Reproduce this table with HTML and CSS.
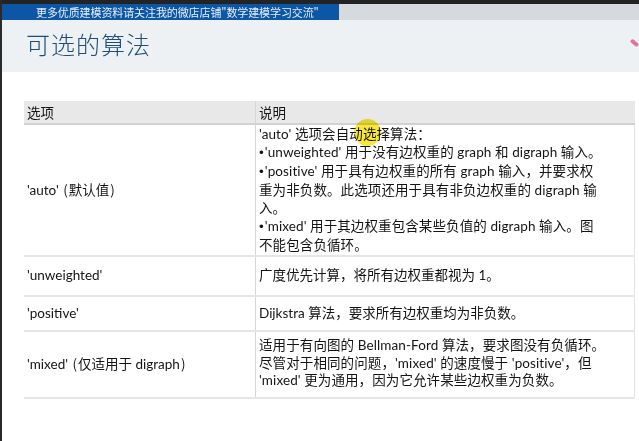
FILE: index.html
```html
<!DOCTYPE html>
<html lang="zh">
<head>
<meta charset="utf-8">
<title>可选的算法</title>
<link rel="stylesheet" href="styles.css">
</head>
<body>
<div class="frame">
  <div class="topstrip"></div>
  <div class="bannerbar">
    <div class="banner">更多优质建模资料请关注我的微店店铺"数学建模学习交流"</div>
    <div class="bannerrest"></div>
  </div>
  <div class="header">
    <h1 class="title">可选的算法</h1>
    <span class="pinkmark"></span>
  </div>
  <div class="content">
    <table class="opts">
      <thead>
        <tr><th class="c1">选项</th><th class="c2">说明</th></tr>
      </thead>
      <tbody>
        <tr class="r1">
          <td class="c1">'auto' <span class="paren">(</span>默认值<span class="paren">)</span></td>
          <td class="c2">
            <div class="ln">'auto' 选项会自<span class="hl">动选</span>择算法：</div>
            <div class="ln"><span class="bul">•</span>'unweighted' 用于没有边权重的 graph 和 digraph 输入。</div>
            <div class="ln"><span class="bul">•</span>'positive' 用于具有边权重的所有 graph 输入，并要求权</div>
            <div class="ln">重为非负数。此选项还用于具有非负边权重的 digraph 输</div>
            <div class="ln">入。</div>
            <div class="ln"><span class="bul">•</span>'mixed' 用于其边权重包含某些负值的 digraph 输入。图</div>
            <div class="ln">不能包含负循环。</div>
          </td>
        </tr>
        <tr class="r2">
          <td class="c1">'unweighted'</td>
          <td class="c2">广度优先计算，将所有边权重都视为 1。</td>
        </tr>
        <tr class="r3">
          <td class="c1">'positive'</td>
          <td class="c2">Dijkstra 算法，要求所有边权重均为非负数。</td>
        </tr>
        <tr class="r4">
          <td class="c1">'mixed' <span class="paren">(</span>仅适用于 digraph<span class="paren">)</span></td>
          <td class="c2">
            <div class="ln">适用于有向图的 Bellman-Ford 算法，要求图没有负循环。</div>
            <div class="ln">尽管对于相同的问题，'mixed' 的速度慢于 'positive'，但</div>
            <div class="ln">'mixed' 更为通用，因为它允许某些边权重为负数。</div>
          </td>
        </tr>
      </tbody>
    </table>
  </div>
</div>
</body>
</html>
```
FILE: styles.css
```css
html, body {
  margin: 0;
  padding: 0;
  width: 639px;
  height: 441px;
  overflow: hidden;
}
body { background: #ffffff; }
.frame {
  width: 637px;
  height: 441px;
  border-left: 2px solid #2a2a2a;
  display: flex;
  flex-direction: column;
  font-family: "Lato", "Noto Sans CJK SC", sans-serif;
  color: #141414;
}
.topstrip {
  height: 4px;
  background: #232323;
}
.bannerbar {
  height: 16px;
  display: flex;
}
.banner {
  width: 337px;
  background: #0b57a6;
  color: #e6eef8;
  font-family: "Noto Sans CJK SC", sans-serif;
  font-size: 11px;
  line-height: 16px;
  padding-left: 34px;
  box-sizing: border-box;
  white-space: nowrap;
  overflow: hidden;
  letter-spacing: -0.1px;
}
.bannerrest {
  flex: 1;
  background: #d6d9de;
}
.header {
  height: 52px;
  background: #eef1f4;
  position: relative;
  display: flex;
  align-items: center;
}
.title {
  margin: -5px 0 0 24px;
  font-size: 24px;
  font-weight: 300;
  color: #1e4d78;
  letter-spacing: 1px;
  line-height: 30px;
  font-family: "Noto Sans CJK SC", sans-serif;
}
.pinkmark {
  position: absolute;
  right: -1px;
  top: 18px;
  width: 9px;
  height: 4px;
  background: #e8709a;
  transform: rotate(40deg);
  transform-origin: left center;
  border-radius: 2px;
}
.content {
  padding: 29px 4px 0 22px;
}
.opts {
  width: 611px;
  border-collapse: collapse;
  font-size: 13.5px;
  line-height: 17.5px;
}
.opts th, .opts td {
  text-align: left;
  font-weight: normal;
  vertical-align: middle;
  padding: 0 3px;
  white-space: nowrap;
}
.opts th.c1, .opts td.c1 { width: 225px; }
.opts th.c2, .opts td.c2 {
  border-left: 1px solid #d6d6d6;
}
.opts td.c2 { border-right: 1px solid #e2e2e2; }
.opts thead tr {
  background: #e8e8e8;
  height: 23px;
  border-bottom: 2px solid #d2d2d2;
}
.opts th { padding-top: 1px; font-family: "Noto Sans CJK SC", sans-serif; }
.opts tbody tr {
  border-bottom: 2px solid #e6e6e6;
}
.paren { font-family: "Noto Sans CJK SC", sans-serif; margin: 0 1px; }
.bul { font-family: "Liberation Sans", sans-serif; margin-right: 1px; }
.ln { letter-spacing: 0.1px; }
.r1 { height: 129px; }
.r1 td.c2 { line-height: 18px; padding-top: 0; padding-bottom: 1px; }
.r2 { height: 40px; }
.r3 { height: 35px; }
.r4 { height: 67px; }
.r4 td.c2 { padding-top: 1px; padding-bottom: 3px; }
.hl {
  position: relative;
}
.hl::before {
  content: "";
  position: absolute;
  left: 5px;
  top: -7px;
  width: 27px;
  height: 27px;
  border-radius: 50%;
  background: #f7e21a;
  opacity: 0.85;
  mix-blend-mode: multiply;
}
```
